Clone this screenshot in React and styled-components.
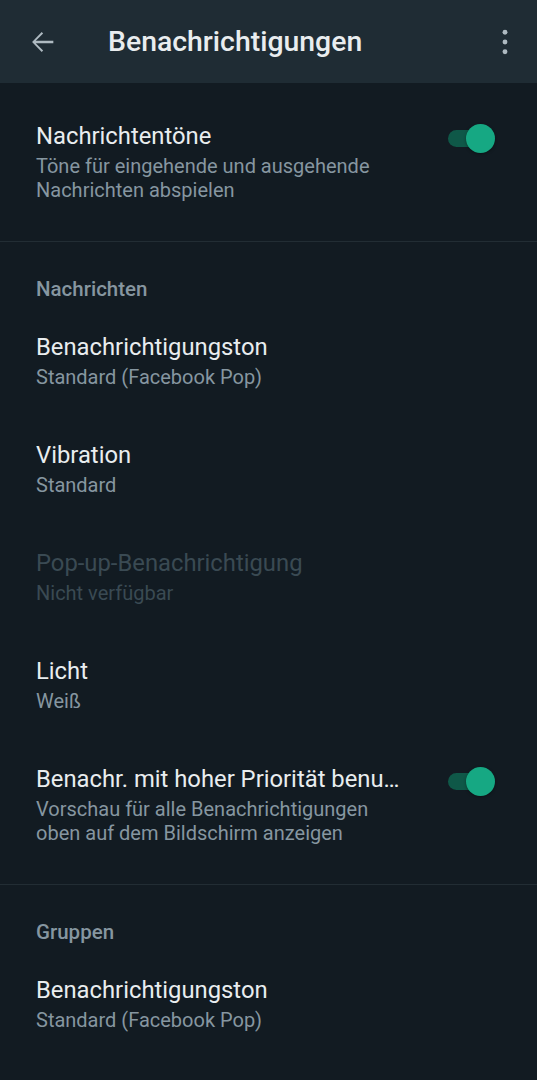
import styled, { createGlobalStyle } from "styled-components";

const GlobalStyle = createGlobalStyle`
  html, body {
    margin: 0;
    padding: 0;
    background: #121b22;
  }
  body {
    font-family: Roboto, "Liberation Sans", sans-serif;
    -webkit-font-smoothing: antialiased;
  }
`;

const Page = styled.div`
  width: 537px;
  min-height: 1080px;
  background: #121b22;
  overflow: hidden;
`;

const Toolbar = styled.header`
  height: 83px;
  display: flex;
  align-items: center;
  background: #1f2c34;
  padding: 0 18px 0 25px;
  box-sizing: border-box;
`;

const IconButton = styled.div`
  display: flex;
  align-items: center;
  justify-content: center;
  color: #aebac1;
`;

const Title = styled.h1`
  flex: 1;
  margin: 0 0 0 49px;
  font-size: 28.4px;
  font-weight: 500;
  color: #e9edef;
`;

const Section = styled.section`
  padding: 13px 0;
  border-bottom: ${(p) => (p.$divider ? "1px solid #222d34" : "none")};
`;

const SectionLabel = styled.div`
  padding: 22px 36px 6px;
  font-size: 20.5px;
  line-height: 24px;
  font-weight: 500;
  color: #8696a0;
`;

const Row = styled.div`
  display: flex;
  align-items: flex-start;
  gap: 43px;
  padding: 25px 42px 26px 36px;
`;

const Texts = styled.div`
  flex: 1;
  min-width: 0;
`;

const RowTitle = styled.div`
  font-size: 23.8px;
  line-height: 30px;
  color: ${(p) => (p.$disabled ? "#3a4a53" : "#e9edef")};
  white-space: nowrap;
  overflow: hidden;
  text-overflow: ellipsis;
`;

const RowSub = styled.div`
  margin-top: 3px;
  font-size: 20px;
  line-height: 24px;
  color: ${(p) => (p.$disabled ? "#3a4a53" : "#8696a0")};
`;

const Switch = styled.div`
  position: relative;
  flex: none;
  width: 48px;
  height: 30px;
  margin-top: 2px;
`;

const Track = styled.div`
  position: absolute;
  left: 1px;
  top: 7px;
  width: 40px;
  height: 17px;
  border-radius: 9px;
  background: #0f5848;
`;

const Thumb = styled.div`
  position: absolute;
  right: 0;
  top: 1px;
  width: 29px;
  height: 29px;
  border-radius: 50%;
  background: #16a883;
  box-shadow: 0 1px 3px rgba(0, 0, 0, 0.35);
`;

function Toggle() {
  return (
    <Switch>
      <Track />
      <Thumb />
    </Switch>
  );
}

function Setting({ title, sub, disabled, toggle }) {
  return (
    <Row>
      <Texts>
        <RowTitle $disabled={disabled}>{title}</RowTitle>
        <RowSub $disabled={disabled}>
          {sub.map((line, i) => (
            <div key={i}>{line}</div>
          ))}
        </RowSub>
      </Texts>
      {toggle && <Toggle />}
    </Row>
  );
}

export default function App() {
  return (
    <Page>
      <GlobalStyle />
      <Toolbar>
        <IconButton>
          <svg width="34" height="34" viewBox="0 0 24 24" fill="currentColor">
            <path d="M20 11.2H7.6l5.2-5.2L11.8 5 5 12l6.8 7 1-1-5.2-5.2H20v-1.6z" />
          </svg>
        </IconButton>
        <Title>Benachrichtigungen</Title>
        <IconButton>
          <svg width="28" height="28" viewBox="0 0 24 24" fill="currentColor">
            <circle cx="12" cy="3.6" r="2.1" />
            <circle cx="12" cy="12" r="2.1" />
            <circle cx="12" cy="20.4" r="2.1" />
          </svg>
        </IconButton>
      </Toolbar>

      <Section $divider>
        <Setting
          title="Nachrichtentöne"
          sub={["Töne für eingehende und ausgehende", "Nachrichten abspielen"]}
          toggle
        />
      </Section>

      <Section $divider>
        <SectionLabel>Nachrichten</SectionLabel>
        <Setting title="Benachrichtigungston" sub={["Standard (Facebook Pop)"]} />
        <Setting title="Vibration" sub={["Standard"]} />
        <Setting title="Pop-up-Benachrichtigung" sub={["Nicht verfügbar"]} disabled />
        <Setting title="Licht" sub={["Weiß"]} />
        <Setting
          title="Benachr. mit hoher Priorität benutzen"
          sub={["Vorschau für alle Benachrichtigungen", "oben auf dem Bildschirm anzeigen"]}
          toggle
        />
      </Section>

      <Section>
        <SectionLabel>Gruppen</SectionLabel>
        <Setting title="Benachrichtigungston" sub={["Standard (Facebook Pop)"]} />
      </Section>
    </Page>
  );
}
